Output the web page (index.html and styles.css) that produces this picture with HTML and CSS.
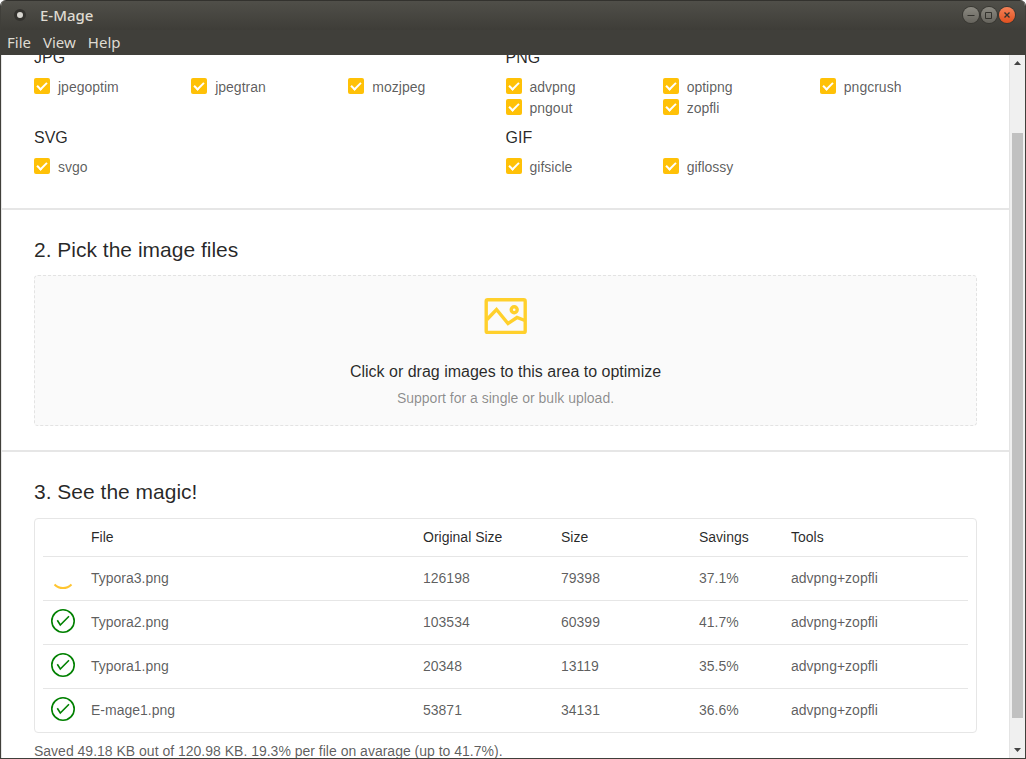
FILE: index.html
```html
<!DOCTYPE html>
<html lang="en">
<head>
<meta charset="utf-8">
<title>E-Mage</title>
<link rel="stylesheet" href="styles.css">
</head>
<body>
<div class="window">
  <header class="titlebar">
    <span class="app-icon"></span>
    <h1 class="app-title">E-Mage</h1>
    <div class="controls">
      <button class="control" aria-label="Minimize"><svg viewBox="0 0 16 16"><path d="M4.500 8.500h7"/></svg></button>
      <button class="control" aria-label="Maximize"><svg viewBox="0 0 16 16"><path d="M4.500 5.500h6v6h-6z"/></svg></button>
      <button class="control close" aria-label="Close"><svg viewBox="0 0 16 16"><path d="M5.500 5.500l5 5M10.500 5.500l-5 5"/></svg></button>
    </div>
  </header>
  <nav class="menubar">
    <button class="menu">File</button>
    <button class="menu">View</button>
    <button class="menu">Help</button>
  </nav>
  <div class="body">
    <main class="content">
      <section class="section tools">
        <div class="group">
          <h3 class="format">JPG</h3>
          <div class="options">
            <label class="option"><input class="check" type="checkbox" checked>jpegoptim</label>
            <label class="option"><input class="check" type="checkbox" checked>jpegtran</label>
            <label class="option"><input class="check" type="checkbox" checked>mozjpeg</label>
          </div>
        </div>
        <div class="group">
          <h3 class="format">PNG</h3>
          <div class="options">
            <label class="option"><input class="check" type="checkbox" checked>advpng</label>
            <label class="option"><input class="check" type="checkbox" checked>optipng</label>
            <label class="option"><input class="check" type="checkbox" checked>pngcrush</label>
            <label class="option"><input class="check" type="checkbox" checked>pngout</label>
            <label class="option"><input class="check" type="checkbox" checked>zopfli</label>
          </div>
        </div>
        <div class="group">
          <h3 class="format">SVG</h3>
          <div class="options">
            <label class="option"><input class="check" type="checkbox" checked>svgo</label>
          </div>
        </div>
        <div class="group">
          <h3 class="format">GIF</h3>
          <div class="options">
            <label class="option"><input class="check" type="checkbox" checked>gifsicle</label>
            <label class="option"><input class="check" type="checkbox" checked>giflossy</label>
          </div>
        </div>
      </section>
      <section class="section">
        <h2 class="heading">2. Pick the image files</h2>
        <button class="dropzone">
          <svg class="picture" viewBox="0 0 44 38"><rect x="2.200" y="2.800" width="39" height="32.600" rx="1.500"/><path d="M3 22.500L12.500 12.500L24 26.500L33 20.500L41 23.500"/><circle cx="30.200" cy="12.800" r="3"/></svg>
          <span class="drop-title">Click or drag images to this area to optimize</span>
          <span class="drop-hint">Support for a single or bulk upload.</span>
        </button>
      </section>
      <section class="section">
        <h2 class="heading">3. See the magic!</h2>
        <div class="card">
          <table class="results">
            <thead>
              <tr><th class="col-status"></th><th>File</th><th class="col-size">Original Size</th><th class="col-size">Size</th><th class="col-savings">Savings</th><th class="col-tools">Tools</th></tr>
            </thead>
            <tbody>
              <tr><td><svg class="status spinner" viewBox="0 0 24 24"><path d="M3.500 18.500C8.500 23.300 15.500 23.300 20.500 18.500"/></svg></td><td>Typora3.png</td><td>126198</td><td>79398</td><td>37.1%</td><td>advpng+zopfli</td></tr>
              <tr><td><svg class="status done" viewBox="0 0 24 24"><circle cx="12" cy="12" r="11.200"/><path d="M6.300 11.300L9.300 16L18 7.300"/></svg></td><td>Typora2.png</td><td>103534</td><td>60399</td><td>41.7%</td><td>advpng+zopfli</td></tr>
              <tr><td><svg class="status done" viewBox="0 0 24 24"><circle cx="12" cy="12" r="11.200"/><path d="M6.300 11.300L9.300 16L18 7.300"/></svg></td><td>Typora1.png</td><td>20348</td><td>13119</td><td>35.5%</td><td>advpng+zopfli</td></tr>
              <tr><td><svg class="status done" viewBox="0 0 24 24"><circle cx="12" cy="12" r="11.200"/><path d="M6.300 11.300L9.300 16L18 7.300"/></svg></td><td>E-mage1.png</td><td>53871</td><td>34131</td><td>36.6%</td><td>advpng+zopfli</td></tr>
            </tbody>
          </table>
        </div>
        <p class="summary">Saved 49.18 KB out of 120.98 KB. 19.3% per file on avarage (up to 41.7%).</p>
      </section>
    </main>
    <div class="scrollbar">
      <svg class="arrow" viewBox="0 0 7 4"><path d="M0 4L3.500 0L7 4z"/></svg>
      <div class="track"><div class="thumb"></div></div>
      <svg class="arrow" viewBox="0 0 7 4"><path d="M0 0L3.500 4L7 0z"/></svg>
    </div>
  </div>
</div>
</body>
</html>
```
FILE: styles.css
```css
*, *::after { box-sizing: border-box; }
body {
  margin: 0;
  background: #fff;
  color: rgba(0, 0, 0, 0.65);
  font: 14px/21px "Liberation Sans", Arial, sans-serif;
}
h1, h2, h3, p { margin: 0; font-weight: 400; }
button { border: 0; padding: 0; font: inherit; color: inherit; background: none; }
.window {
  display: flex;
  flex-direction: column;
  height: 100vh;
  border: 1px solid #403f3a;
  border-top: 0;
  border-radius: 6px 6px 0 0;
  overflow: hidden;
}
.titlebar {
  display: flex;
  align-items: center;
  flex: none;
  height: 30px;
  padding: 0 10px 2px 13px;
  background: linear-gradient(#504f49, #3e3d38);
  border-top: 1px solid #33322e;
  color: #dfdbd2;
}
.app-icon {
  width: 12px;
  height: 12px;
  border: 3px solid #33322e;
  border-radius: 50%;
  background: #d8d6d0;
}
.app-title {
  flex: 1;
  margin-left: 14px;
  font: 500 15px/20px "Noto Sans", sans-serif;
}
.controls { display: flex; gap: 2px; }
.control {
  width: 16px;
  height: 16px;
  border-radius: 50%;
  background: linear-gradient(#8b8981, #66645d);
  box-shadow: 0 0 0 1px #383732;
}
.control svg { display: block; fill: none; stroke: #33322d; stroke-width: 1; }
.close { background: linear-gradient(#f58258, #e0501f); }
.close svg { stroke-width: 1.4; }
.menubar {
  display: flex;
  flex: none;
  gap: 12px;
  height: 25px;
  padding: 0 6px;
  background: #403f3a;
  color: #dfdbd2;
  font: 15px/25px "Noto Sans", sans-serif;
}
.body { display: flex; flex: 1; min-height: 0; }
.content { flex: 1; overflow: hidden; border-left: 1px solid #e6e6e6; }
.section { padding: 24px 32px; border-bottom: 2px solid #e6e6e6; }
.section:last-child { border-bottom: 0; }
.tools {
  display: grid;
  grid-template-columns: 1fr 1fr;
  row-gap: 7px;
  margin-top: -9px;
  padding-top: 0;
  padding-bottom: 30px;
}
.format { margin-bottom: 7px; color: rgba(0, 0, 0, 0.85); font-size: 16px; line-height: 24px; }
.options { display: grid; grid-template-columns: repeat(3, 1fr); }
.option { display: flex; align-items: center; gap: 8px; }
.check {
  appearance: none;
  display: grid;
  place-items: center;
  width: 16px;
  height: 16px;
  margin: 0 0 3px;
  border-radius: 2px;
  background: #ffc107;
}
.check:checked::after {
  content: "";
  width: 10px;
  height: 6px;
  margin-bottom: 3px;
  border: solid #fff;
  border-width: 0 0 2px 2px;
  transform: rotate(-45deg);
}
.heading { margin-bottom: 9px; color: rgba(0, 0, 0, 0.85); font-size: 21px; line-height: 32px; }
.dropzone {
  display: flex;
  flex-direction: column;
  align-items: center;
  width: 100%;
  padding: 21px 16px 16px;
  border: 1px dashed #e3e3e3;
  border-radius: 4px;
  background: #fafafa;
}
.picture {
  width: 44px;
  height: 38px;
  margin-bottom: 25px;
  fill: none;
  stroke: #ffd02c;
  stroke-width: 3.4;
}
.drop-title { margin-bottom: 4px; color: rgba(0, 0, 0, 0.85); font-size: 16px; line-height: 24px; }
.drop-hint { color: rgba(0, 0, 0, 0.45); }
.card { margin-top: 10px; padding: 0 8px; border: 1px solid #e6e6e6; border-radius: 4px; }
.results { width: 100%; table-layout: fixed; border-collapse: collapse; }
.results th, .results td { padding: 0 8px; text-align: left; }
.results th { height: 37px; color: rgba(0, 0, 0, 0.85); font-weight: 400; }
.results td { height: 44px; border-top: 1px solid #e6e6e6; }
.results .col-status { width: 40px; }
.col-size { width: 138px; }
.col-savings { width: 92px; }
.col-tools { width: 185px; }
.status { display: block; width: 24px; height: 24px; fill: none; stroke-width: 1.6; }
.done { margin-bottom: 2px; stroke: #008000; }
.spinner { stroke: #ffc530; stroke-width: 2; }
.summary { margin-top: 8px; }
.scrollbar {
  display: flex;
  flex-direction: column;
  align-items: center;
  width: 16px;
  padding: 6px 0;
  border-left: 1px solid #e4e4e4;
  background: #f0f0f0;
}
.arrow { width: 7px; height: 4px; fill: #444; }
.track { flex: 1; width: 11px; padding: 68px 0 30px; }
.thumb { height: 100%; background: #c1c1c1; }
```
